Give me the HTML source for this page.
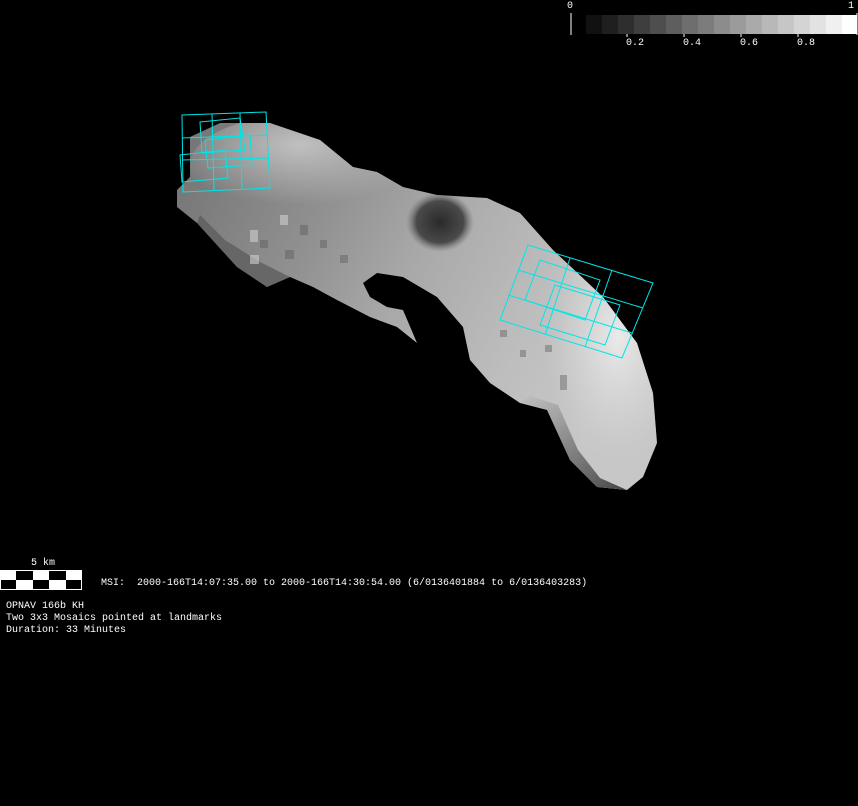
<!DOCTYPE html>
<html><head><style>
html,body{margin:0;padding:0;background:#000;width:858px;height:806px;overflow:hidden}
.t{position:absolute;font-family:"Liberation Mono",monospace;font-size:10px;color:#fff;white-space:pre;line-height:12px}
</style></head><body>
<svg width="858" height="806" style="position:absolute;left:0;top:0">
<defs>
<linearGradient id="g1" x1="0" y1="0" x2="1" y2="0.4">
<stop offset="0" stop-color="#707070"/><stop offset="0.35" stop-color="#909090"/><stop offset="0.55" stop-color="#a8a8a8"/><stop offset="0.8" stop-color="#bdbdbd"/><stop offset="1" stop-color="#c8c8c8"/>
</linearGradient>
<radialGradient id="gt" cx="0.5" cy="0.3" r="0.6">
<stop offset="0" stop-color="#c0c0c0"/><stop offset="1" stop-color="#c0c0c0" stop-opacity="0"/>
</radialGradient>
<radialGradient id="g2" cx="0.75" cy="0.45" r="0.55">
<stop offset="0" stop-color="#eaeaea"/><stop offset="0.6" stop-color="#d0d0d0" stop-opacity="0.6"/><stop offset="1" stop-color="#bbb" stop-opacity="0"/>
</radialGradient>
<radialGradient id="g3" cx="0.5" cy="0.5" r="0.5">
<stop offset="0" stop-color="#2a2a2a"/><stop offset="0.7" stop-color="#4a4a4a"/><stop offset="1" stop-color="#777" stop-opacity="0"/>
</radialGradient>
<linearGradient id="rim" x1="0" y1="0" x2="1" y2="1">
<stop offset="0" stop-color="#666" stop-opacity="0"/><stop offset="0.5" stop-color="#5a5a5a" stop-opacity="0.6"/><stop offset="1" stop-color="#444"/>
</linearGradient>
<clipPath id="cb"><path d="M190,137 L220,123 L270,123 L320,140 L353,167 L377,172 L403,187 L437,195 L487,198 L520,213 L553,250 L603,297 L637,343 L653,393 L657,443 L643,477 L627,490 L597,487 L570,460 L547,410 L520,403 L490,383 L470,360 L463,327 L437,297 L403,277 L377,273 L363,283 L370,297 L387,307 L403,310 L417,343 L397,327 L370,317 L337,300 L313,287 L290,277 L267,287 L237,267 L197,223 L177,207 L177,190 L190,177 Z"/></clipPath>
</defs>
<!-- colorbar -->
<g>
<rect x="586" y="15" width="16" height="19" fill="#111"/><rect x="602" y="15" width="16" height="19" fill="#1f1f1f"/><rect x="618" y="15" width="16" height="19" fill="#2e2e2e"/><rect x="634" y="15" width="16" height="19" fill="#3e3e3e"/><rect x="650" y="15" width="16" height="19" fill="#4e4e4e"/><rect x="666" y="15" width="16" height="19" fill="#5e5e5e"/><rect x="682" y="15" width="16" height="19" fill="#6e6e6e"/><rect x="698" y="15" width="16" height="19" fill="#7c7c7c"/><rect x="714" y="15" width="16" height="19" fill="#8c8c8c"/><rect x="730" y="15" width="16" height="19" fill="#9b9b9b"/><rect x="746" y="15" width="16" height="19" fill="#aaa"/><rect x="762" y="15" width="16" height="19" fill="#b8b8b8"/><rect x="778" y="15" width="16" height="19" fill="#c6c6c6"/><rect x="794" y="15" width="16" height="19" fill="#d4d4d4"/><rect x="810" y="15" width="16" height="19" fill="#e2e2e2"/><rect x="826" y="15" width="16" height="19" fill="#f0f0f0"/><rect x="842" y="15" width="15" height="19" fill="#fff"/>
<line x1="571" y1="13" x2="571" y2="35" stroke="#fff"/>
<line x1="857" y1="13" x2="857" y2="35" stroke="#fff"/>
<line x1="627" y1="34" x2="627" y2="37" stroke="#fff"/><line x1="684" y1="34" x2="684" y2="37" stroke="#fff"/><line x1="741" y1="34" x2="741" y2="37" stroke="#fff"/><line x1="798" y1="34" x2="798" y2="37" stroke="#fff"/>
</g>
<!-- asteroid -->
<g clip-path="url(#cb)">
<rect x="170" y="110" width="500" height="390" fill="url(#g1)"/>
<ellipse cx="300" cy="165" rx="110" ry="50" fill="url(#gt)"/>
<path d="M520,213 L553,250 L603,297 L637,343 L653,393 L657,443 L643,477 L627,490 L597,487 L570,460 L547,410 L540,360 L520,300 L500,250 Z" fill="url(#g2)"/>
<ellipse cx="440" cy="222" rx="34" ry="30" fill="url(#g3)"/>
<path d="M520,403 L547,410 L570,460 L597,487 L627,490 L600,478 L578,450 L558,405 L530,396 Z" fill="url(#rim)"/>
<path d="M197,223 L237,267 L267,287 L290,277 L260,262 L225,240 L200,215 Z" fill="#5e5e5e" opacity="0.8"/>
<g fill="#555" opacity="0.4">
<rect x="300" y="225" width="8" height="10"/><rect x="320" y="240" width="7" height="8"/><rect x="285" y="250" width="9" height="9"/><rect x="340" y="255" width="8" height="8"/><rect x="260" y="240" width="8" height="8"/>
<rect x="500" y="330" width="7" height="7"/><rect x="520" y="350" width="6" height="7"/><rect x="545" y="345" width="7" height="7"/><rect x="560" y="375" width="7" height="15"/>
</g>
<g fill="#cfcfcf" opacity="0.6">
<rect x="280" y="215" width="8" height="10"/><rect x="250" y="230" width="8" height="12"/><rect x="250" y="255" width="9" height="9"/>
</g>
</g>
<!-- cyan mosaics -->
<g stroke="#00e5e5" stroke-width="1" fill="none">
<path d="M182,115 L266,112 L270,188 L183,192 Z"/>
<path d="M182,138 L268,135 M182,160 L269,158 M212,114 L214,190 M240,113 L242,189"/>
<path d="M200,122 L240,118 L245,150 L202,153 Z"/>
<path d="M180,155 L225,150 L228,178 L182,182 Z"/>
<path d="M205,140 L250,135 L252,165 L208,168 Z"/>
<path d="M528,245 L653,283 L622,358 L500,320 Z"/>
<path d="M518,270 L643,308 M508,295 L632,333 M570,258 L545,335 M612,270 L585,347"/>
<path d="M540,260 L600,280 L585,320 L525,300 Z"/>
<path d="M555,285 L620,305 L605,345 L540,325 Z"/>
</g>
<!-- scale bar -->
<rect x="0.5" y="570.5" width="81" height="19" fill="#000" stroke="#fff"/>
<rect x="0" y="570" width="16" height="10" fill="#fff"/><rect x="33" y="570" width="16" height="10" fill="#fff"/><rect x="66" y="570" width="16" height="10" fill="#fff"/>
<rect x="16" y="580" width="17" height="10" fill="#fff"/><rect x="49" y="580" width="17" height="10" fill="#fff"/>
</svg>
<div class="t" style="left:567px;top:1px">0</div>
<div class="t" style="left:848px;top:1px">1</div>
<div class="t" style="left:626px;top:38px">0.2</div>
<div class="t" style="left:683px;top:38px">0.4</div>
<div class="t" style="left:740px;top:38px">0.6</div>
<div class="t" style="left:797px;top:38px">0.8</div>
<div class="t" style="left:31px;top:558px">5 km</div>
<div class="t" style="left:101px;top:578px">MSI:  2000-166T14:07:35.00 to 2000-166T14:30:54.00 (6/0136401884 to 6/0136403283)</div>
<div class="t" style="left:6px;top:601px">OPNAV 166b KH
Two 3x3 Mosaics pointed at landmarks
Duration: 33 Minutes</div>
</body></html>
